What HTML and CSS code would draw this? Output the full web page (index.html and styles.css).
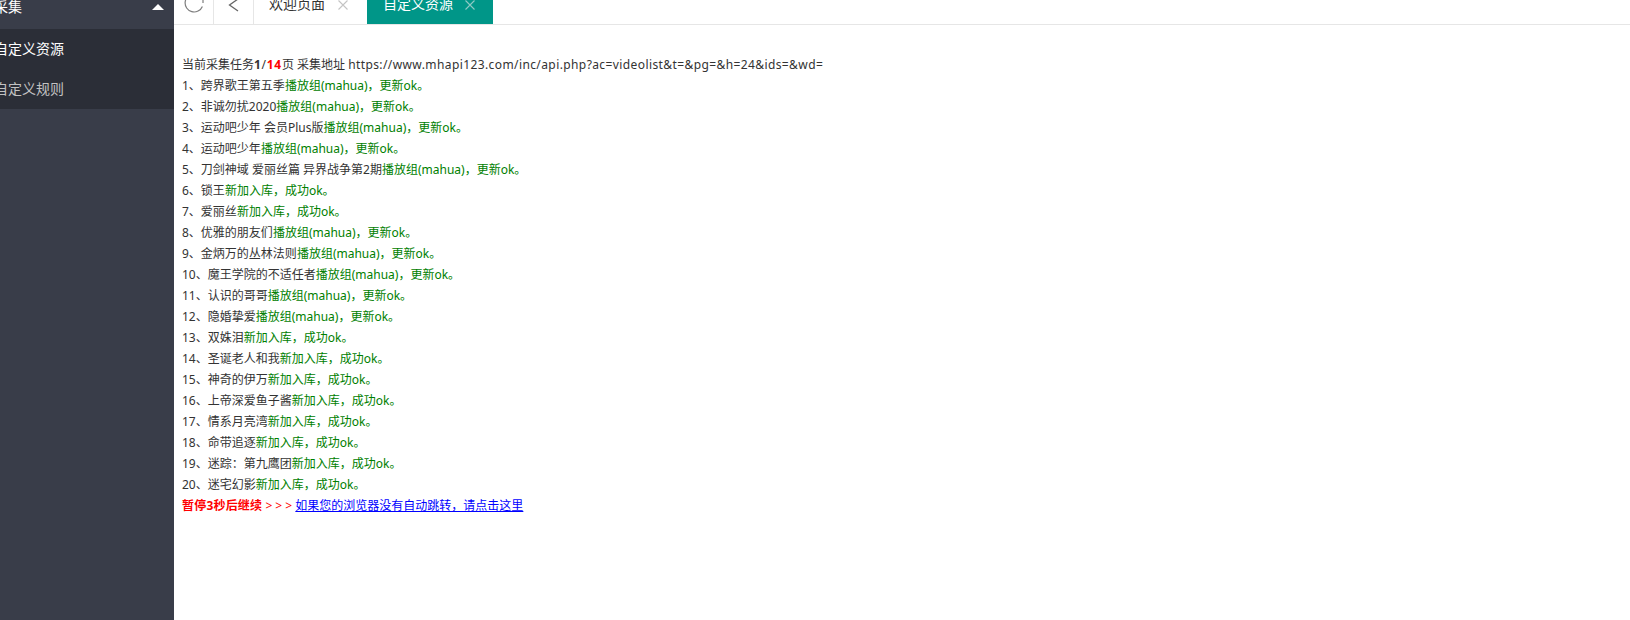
FILE: index.html
```html
<!DOCTYPE html>
<html lang="zh-CN">
<head>
<meta charset="utf-8">
<title>自定义资源</title>
<link rel="stylesheet" href="styles.css">
</head>
<body>
<div class="shell">
  <aside class="side">
    <div class="group"><span>采集</span><i class="caret"></i></div>
    <ul class="sub">
      <li class="on">自定义资源</li>
      <li>自定义规则</li>
    </ul>
  </aside>
  <main class="main">
    <nav class="tabs">
      <div class="tool"><svg width="39" height="24" viewBox="0 0 39 24"><path d="M28.4 6.5A9 9 0 1 1 20 -6" fill="none" stroke="#7d7d7d" stroke-width="1.2"/><path d="M29 -2V3" fill="none" stroke="#7d7d7d" stroke-width="1.2"/></svg></div>
      <div class="tool"><svg width="39" height="24" viewBox="0 0 39 24"><path d="M24 -1L15.5 5L24 11" fill="none" stroke="#666" stroke-width="1.3"/></svg></div>
      <div class="tab"><span>欢迎页面</span><svg class="x" width="10" height="10" viewBox="0 0 10 10"><path d="M.5 .5L9.5 9.5M9.5 .5L.5 9.5" stroke="#c4c4c4" stroke-width="1.1"/></svg></div>
      <div class="tab active"><span>自定义资源</span><svg class="x" width="10" height="10" viewBox="0 0 10 10"><path d="M.5 .5L9.5 9.5M9.5 .5L.5 9.5" stroke="#8fcac4" stroke-width="1.1"/></svg></div>
    </nav>
    <section class="log">
      <p>当前采集任务<span class="count"><strong>1</strong>/<strong class="red">14</strong></span>页 采集地址 <span class="url">https://www.mhapi123.com/inc/api.php?ac=videolist&amp;t=&amp;pg=&amp;h=24&amp;ids=&amp;wd=</span></p>
      <p>1、跨界歌王第五季<span class="g">播放组(mahua)，更新ok。</span></p>
      <p>2、非诚勿扰2020<span class="g">播放组(mahua)，更新ok。</span></p>
      <p>3、运动吧少年 会员Plus版<span class="g">播放组(mahua)，更新ok。</span></p>
      <p>4、运动吧少年<span class="g">播放组(mahua)，更新ok。</span></p>
      <p>5、刀剑神域 爱丽丝篇 异界战争第2期<span class="g">播放组(mahua)，更新ok。</span></p>
      <p>6、锁王<span class="g">新加入库，成功ok。</span></p>
      <p>7、爱丽丝<span class="g">新加入库，成功ok。</span></p>
      <p>8、优雅的朋友们<span class="g">播放组(mahua)，更新ok。</span></p>
      <p>9、金炳万的丛林法则<span class="g">播放组(mahua)，更新ok。</span></p>
      <p>10、魔王学院的不适任者<span class="g">播放组(mahua)，更新ok。</span></p>
      <p>11、认识的哥哥<span class="g">播放组(mahua)，更新ok。</span></p>
      <p>12、隐婚挚爱<span class="g">播放组(mahua)，更新ok。</span></p>
      <p>13、双姝泪<span class="g">新加入库，成功ok。</span></p>
      <p>14、圣诞老人和我<span class="g">新加入库，成功ok。</span></p>
      <p>15、神奇的伊万<span class="g">新加入库，成功ok。</span></p>
      <p>16、上帝深爱鱼子酱<span class="g">新加入库，成功ok。</span></p>
      <p>17、情系月亮湾<span class="g">新加入库，成功ok。</span></p>
      <p>18、命带追逐<span class="g">新加入库，成功ok。</span></p>
      <p>19、迷踪：第九鹰团<span class="g">新加入库，成功ok。</span></p>
      <p>20、迷宅幻影<span class="g">新加入库，成功ok。</span></p>
      <p class="red"><strong class="pause">暂停3秒后继续</strong> &gt; &gt; &gt; <a href="#">如果您的浏览器没有自动跳转，请点击这里</a></p>
    </section>
  </main>
</div>
</body>
</html>
```
FILE: styles.css
```css
* { box-sizing: border-box; }
html, body { margin: 0; height: 100%; overflow: hidden; background: #fff; }
body { font: 12px/21px "Noto Sans", "Noto Sans CJK SC", sans-serif; color: #333; }
.shell { display: flex; height: 620px; }
.side { width: 174px; flex: none; background: #393d49; overflow: hidden; color: #fff; font-size: 14px; }
.group { height: 29px; padding: 0 10px 0 0; margin-left: -6px; display: flex; justify-content: space-between; align-items: flex-start; line-height: 14px; }
.caret { width: 0; height: 0; margin-top: 4px; border: 6px solid transparent; border-top: 0; border-bottom: 6px solid #fff; }
.sub { list-style: none; margin: 0; padding: 0; background: #2b2e37; }
.sub li { height: 40px; line-height: 40px; color: #c2c2c2; font-size: 14px; text-indent: -6px; }
.sub li.on { color: #fff; }
.main { flex: 1; min-width: 0; }
.tabs { height: 25px; display: flex; border-bottom: 1px solid #e6e6e6; overflow: hidden; }
.tool { width: 40px; height: 24px; border-right: 1px solid #e6e6e6; overflow: hidden; }
.tool svg { display: block; }
.tab { width: 113px; height: 24px; padding-left: 15px; font-size: 14px; line-height: 8px; color: #333; display: flex; gap: 13px; }
.tab .x { margin-top: 0; flex: none; }
.tab.active { width: 126px; padding-left: 16px; gap: 12px; background: #009688; color: #fff; }
.log { padding: 29px 0 0 8px; }
.log p { margin: 0; height: 21px; white-space: nowrap; }
.log strong { font-weight: 700; }
.count { letter-spacing: .7px; }
.url { letter-spacing: .4px; }
.pause { letter-spacing: .2px; }
.g { color: green; }
.red { color: red; }
.log a { color: #00f; text-decoration: underline; }
```
